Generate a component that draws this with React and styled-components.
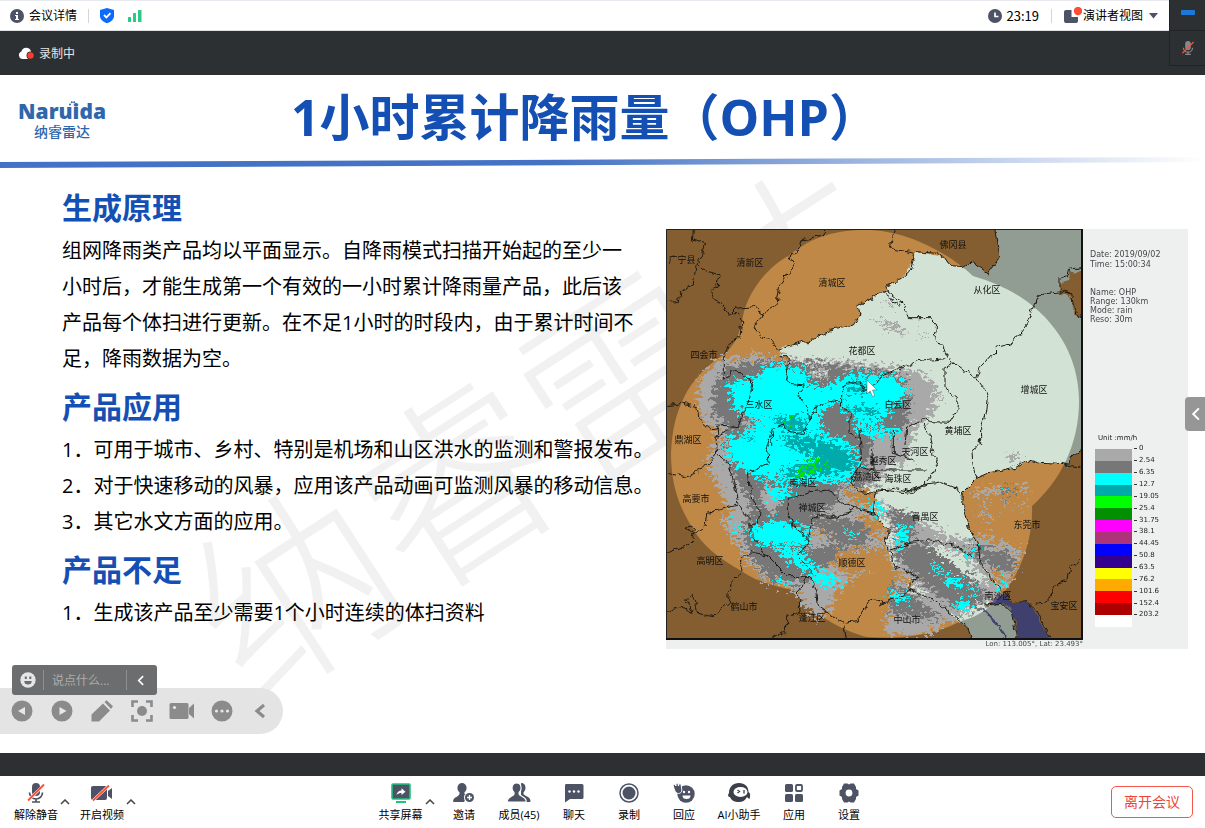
import React from "react";
import styled, { createGlobalStyle } from "styled-components";

const GlobalStyle = createGlobalStyle`
  * { box-sizing: border-box; }
  body {
    margin: 0;
    background: #fff;
    color: #000;
    font-family: "Open Sans", "Noto Sans CJK SC", sans-serif;
    font-size: 12px;
  }
  button, input { font: inherit; }
  h1, h2, p, ol, ul, dl, dd, figure { margin: 0; padding: 0; }
  ol, ul { list-style: none; }
  svg { display: block; }
`;

const ink = "#4d5364";
const red = "#ff4d35";

/* ---------- layout ---------- */

const Page = styled.div`
  min-height: 100vh;
  display: flex;
  flex-direction: column;
  position: relative;
`;

const Header = styled.header`
  height: 31px;
  display: flex;
  justify-content: space-between;
  align-items: center;
  padding: 0 47px 0 10px;
  border-top: 1px solid #e8e8f0;
  border-bottom: 1px solid #dfe0e4;
  background: #fff;
`;

const HeaderGroup = styled.div`
  display: flex;
  align-items: center;
  gap: ${(p) => p.$gap}px;
`;

const PlainButton = styled.button`
  display: flex;
  align-items: center;
  gap: ${(p) => p.$gap || 0}px;
  padding: 0;
  border: 0;
  background: none;
  color: inherit;
  line-height: 16px;
  white-space: nowrap;
  cursor: pointer;
`;

const Divider = styled.span`
  width: 1px;
  height: ${(p) => p.$height || 14}px;
  background: ${(p) => p.$color || "#d4d5d9"};
`;

const Clock = styled.span`
  display: flex;
  align-items: center;
  gap: 5px;
  font-family: "Noto Sans CJK SC", sans-serif;
  font-size: 13px;
`;

const RecordingBar = styled.div`
  height: 44px;
  display: flex;
  align-items: center;
  gap: 5px;
  padding-left: 18px;
  background: #2d3033;
  color: #e6e6e6;
`;

const FloatingVideo = styled.aside`
  position: absolute;
  top: 0;
  right: 0;
  width: 36px;
  background: #2d3033;
  border-left: 1px solid #202224;
  border-bottom: 1px solid #202224;
`;

const FloatingCell = styled.div`
  height: ${(p) => p.$height}px;
  display: flex;
  align-items: center;
  justify-content: center;
  border-bottom: ${(p) => (p.$line ? "1px solid #202224" : "0")};
`;

const MiniBar = styled.button`
  width: 14px;
  height: 5px;
  margin-bottom: 6px;
  padding: 0;
  border: 0;
  border-radius: 1px;
  background: #1c79d9;
`;

const Slide = styled.main`
  flex: 1;
  display: flex;
  flex-direction: column;
  position: relative;
  isolation: isolate;
  background: #fff;
`;

const SlideHead = styled.div`
  height: 82px;
  display: grid;
  grid-template-columns: 1fr auto 1fr;
  align-items: start;
  padding: 0 53px 0 18px;
`;

const Logo = styled.div`
  width: 88px;
  padding-top: 24px;
  display: flex;
  flex-direction: column;
  align-items: center;
  position: relative;
  color: #2f67ac;
`;

const LogoName = styled.span`
  font-family: "Open Sans", sans-serif;
  font-weight: 800;
  font-size: 21px;
  line-height: 25px;
`;

const LogoSub = styled.span`
  font-size: 14px;
  line-height: 16px;
  font-weight: 500;
`;

const LogoCrown = styled.svg`
  position: absolute;
  left: 51px;
  top: 26px;
`;

const Title = styled.h1`
  padding-top: 6px;
  color: #1450b4;
  font-size: 50px;
  line-height: 72px;
  font-weight: 700;
  white-space: nowrap;
`;

const Rule = styled.svg`
  width: 100%;
  height: 11px;
`;

const SlideBody = styled.div`
  flex: 1;
  display: flex;
  justify-content: space-between;
  align-items: flex-start;
  gap: 12px;
  padding: 20px 17px 60px 62px;
  position: relative;
`;

const Watermark = styled.svg`
  position: absolute;
  z-index: -1;
  left: 0;
  top: 0;
  overflow: visible;
`;

const Copy = styled.div`
  position: relative;
  flex: 0 0 592px;
`;

const Heading = styled.h2`
  margin-bottom: 5px;
  color: #1450b4;
  font-size: 30px;
  line-height: 40px;
  font-weight: 700;
`;

const Paragraph = styled.p`
  max-width: 577px;
  margin-bottom: 10px;
  font-size: 20px;
  line-height: 36px;
`;

const Points = styled.ol`
  margin-bottom: 10px;
  font-size: 20px;
  line-height: 36px;
  white-space: nowrap;
`;

const Figure = styled.figure`
  position: relative;
  flex: 0 0 522px;
  display: grid;
  grid-template-columns: 417px 1fr;
  margin-top: 41px;
  background: #eef0f0;
  color: #45484a;
  font-family: "DejaVu Sans", sans-serif;
  font-size: 7px;
`;

const Caption = styled.figcaption`
  height: 9px;
  line-height: 9px;
  text-align: right;
`;

const Side = styled.div`
  padding: 21px 0 0 7px;
`;

const Info = styled.ul`
  margin-bottom: ${(p) => p.$after}px;
  font-size: 8px;
  line-height: ${(p) => p.$line}px;
`;

const Unit = styled.p`
  margin: 0 0 6px 8px;
  line-height: 9px;
  color: #222;
`;

const Scale = styled.div`
  height: 178px;
  display: flex;
  padding-left: 5px;
`;

const Swatches = styled.div`
  width: 37px;
  display: flex;
  flex-direction: column;
`;

const Swatch = styled.span`
  flex: 1;
  background: ${(p) => p.$color};
`;

const Ticks = styled.ul`
  display: flex;
  flex-direction: column;
  margin: -6px 0 6px 2px;
`;

const Tick = styled.li`
  flex: 1;
  display: flex;
  align-items: center;
  gap: 2px;
  line-height: 9px;
  color: #222;
  &::before {
    content: "";
    width: 3px;
    height: 1px;
    background: #333;
  }
`;

const Cursor = styled.svg`
  position: absolute;
  left: 200px;
  top: 150px;
`;

const SideHandle = styled.button`
  position: absolute;
  right: 0;
  top: 322px;
  width: 20px;
  height: 34px;
  display: flex;
  align-items: center;
  justify-content: center;
  padding: 0;
  border: 0;
  border-radius: 4px 0 0 4px;
  background: #969696;
`;

const PresenterTools = styled.div`
  position: absolute;
  left: 0;
  bottom: 19px;
  height: 46px;
  display: flex;
  align-items: center;
  gap: 16px;
  padding: 0 9px 0 10px;
  border-radius: 0 23px 23px 0;
  background: #e4e4e4;
`;

const ChatPill = styled.form`
  position: absolute;
  left: 12px;
  bottom: 58px;
  width: 145px;
  height: 30px;
  display: flex;
  align-items: center;
  padding: 0 8px;
  border-radius: 3px;
  background: #6b6d6e;
`;

const ChatInput = styled.input`
  flex: 1;
  min-width: 0;
  padding: 0 8px;
  border: 0;
  outline: 0;
  background: transparent;
  color: #fff;
  font-size: 12px;
  &::placeholder { color: #acaeaf; opacity: 1; }
`;

const PillToggle = styled(PlainButton)`
  width: 22px;
  justify-content: flex-end;
  padding-right: 5px;
`;

const BottomStrip = styled.div`
  height: 23px;
  background: #2d3033;
`;

const Toolbar = styled.footer`
  height: 52px;
  display: flex;
  justify-content: space-between;
  align-items: center;
  padding: 0 12px 0 14px;
  background: #fff;
`;

const ToolGroup = styled.div`
  display: flex;
  gap: ${(p) => p.$gap || 0}px;
  padding-right: ${(p) => p.$after || 0}px;
`;

const Split = styled.div`
  display: flex;
`;

const Tool = styled.button`
  width: ${(p) => p.$width || 55}px;
  height: 52px;
  display: flex;
  flex-direction: column;
  align-items: center;
  gap: 4px;
  padding: 7px 0 0;
  border: 0;
  background: none;
  color: #000;
  font-size: 11px;
  line-height: 16px;
  white-space: nowrap;
  cursor: pointer;
`;

const Caret = styled.button`
  width: 14px;
  padding: 0 2px;
  border: 0;
  background: none;
`;

const LeaveButton = styled.button`
  width: 82px;
  height: 32px;
  padding: 0;
  border: 1px solid #f4574a;
  border-radius: 5px;
  background: #fff;
  color: #ee4336;
  font-size: 14px;
  line-height: 20px;
`;

/* ---------- icons ---------- */

const Icon = ({ size = 20, w, h, box, children }) => (
  <svg width={w || size} height={h || size} viewBox={box || "0 0 20 20"} fill={ink} aria-hidden="true">
    {children}
  </svg>
);

const InfoIcon = () => (
  <Icon size={14} box="0 0 14 14">
    <circle cx="7" cy="7" r="7" />
    <rect x="6" y="3" width="2" height="2" fill="#fff" />
    <path d="M5 6h3v4h1v1H5v-1h1V7H5z" fill="#fff" />
  </Icon>
);
const ShieldIcon = () => (
  <Icon w={14} h={15} box="0 0 14 15">
    <path d="M7 0l7 2v6c0 3.500-3 6-7 7.200C3 14 0 11.500 0 8V2z" fill="#0a6cff" />
    <path d="M4 7l2.400 2.400L10.500 5.200" fill="none" stroke="#fff" strokeWidth="1.800" />
  </Icon>
);
const SignalIcon = () => (
  <Icon w={14} h={12} box="0 0 14 12">
    <g fill="#2bcb85">
      <rect y="7" width="3" height="5" rx=".5" />
      <rect x="5" y="3" width="3" height="9" rx=".5" />
      <rect x="10" width="3.500" height="12" rx=".5" />
    </g>
  </Icon>
);
const ClockIcon = () => (
  <Icon size={14} box="0 0 14 14">
    <circle cx="7" cy="7" r="7" />
    <path d="M7 3.500V7.500H10.500" fill="none" stroke="#fff" strokeWidth="1.700" />
  </Icon>
);
const ViewIcon = () => (
  <Icon w={18} h={17} box="0 0 18 17">
    <path d="M2 3h5.500v7H14v4a2 2 0 0 1-2 2H2a2 2 0 0 1-2-2V5a2 2 0 0 1 2-2z" />
    <circle cx="14" cy="4" r="4.200" fill={red} />
  </Icon>
);
const CloudIcon = () => (
  <Icon w={16} h={13} box="0 0 16 13">
    <path d="M4 12a4 4 0 0 1-.6-7.600A5 5 0 0 1 13 4.500L12 12z" fill="#fff" />
    <circle cx="12.500" cy="8.500" r="4" fill="#2d3033" />
    <circle cx="12.500" cy="8.500" r="3.200" fill="#ff3b30" />
  </Icon>
);
const MicOff = ({ color = ink, size = 20 }) => (
  <Icon size={size}>
    <rect x="6" y="0" width="8" height="13" rx="4" fill={color} />
    <path d="M3.500 9.500a6.500 6.500 0 0 0 13 0M10 16v3M6 19h8" fill="none" stroke={color} strokeWidth="1.700" />
    <path d="M2.500 17L18 2" stroke="#fff" strokeWidth={color === ink ? 3 : 0} />
    <path d="M2 17.500L18 1.500" stroke={red} strokeWidth="1.800" />
  </Icon>
);
const VideoOff = () => (
  <Icon w={22} h={20} box="0 0 22 20">
    <rect x="0" y="3" width="16" height="14" rx="2" />
    <path d="M17 8l4-3v11l-4-3z" />
    <path d="M2 17.500L18 2.500" stroke="#fff" strokeWidth="3" />
    <path d="M2 17.500L18 2.500" stroke={red} strokeWidth="1.800" />
  </Icon>
);
const ShareIcon = () => (
  <Icon>
    <rect x="1" y="1" width="18" height="15" rx="1" stroke="#20c27f" strokeWidth="1.600" />
    <rect x="5" y="18" width="10" height="2" fill="#20c27f" />
    <path d="M5.500 12c.5-3 2.500-4.500 5-4.500V5.200l4 3.600-4 3.300V10c-2 0-3.500.5-5 2z" fill="#fff" />
  </Icon>
);
const InviteIcon = () => (
  <Icon w={22} box="0 0 22 20">
    <ellipse cx="9" cy="5" rx="4.600" ry="5" />
    <path d="M6.500 8h5v3l3 1.500L11 19H1c-.7 0-1-.5-.8-1.500C1 14 6 13.500 6.500 11z" />
    <circle cx="16.500" cy="14.500" r="5.500" fill="#fff" />
    <circle cx="16.500" cy="14.500" r="4.500" />
    <path d="M16.500 12v5M14 14.500h5" stroke="#fff" strokeWidth="1.400" />
  </Icon>
);
const MembersIcon = () => (
  <Icon w={24} box="0 0 24 20">
    <path d="M14 0c3 0 4.500 2 4.500 4.800 0 2-1 3.700-2 4.700v1.500c1 2 6.500 2.500 7 6.500 0 1-.4 1.500-1.200 1.500H14z" />
    <path d="M9.500 0c3 0 4.600 2.200 4.600 5 0 2-.9 3.800-2 4.600V11c.6 2 6.500 3 7 6.500.2 1-.3 1.500-1 1.500H1.500c-1 0-1.400-.5-1.200-1.500C.9 14 6.500 13 7 11V9.600C5.800 8.800 5 7 5 5c0-2.800 1.600-5 4.500-5z" stroke="#fff" strokeWidth="1.200" />
  </Icon>
);
const ChatIcon = () => (
  <Icon>
    <path d="M2 1h16a1.500 1.500 0 0 1 1.500 1.500v12A1.500 1.500 0 0 1 18 16H6l-5 3.500V2.500A1.500 1.500 0 0 1 2 1z" />
    <g fill="#fff"><circle cx="5.500" cy="8.500" r="1.200" /><circle cx="10" cy="8.500" r="1.200" /><circle cx="14.500" cy="8.500" r="1.200" /></g>
  </Icon>
);
const RecordIcon = () => (
  <Icon>
    <circle cx="10" cy="10" r="9" fill="none" stroke={ink} strokeWidth="1.500" />
    <circle cx="10" cy="10" r="6.500" />
  </Icon>
);
const ReactIcon = () => (
  <Icon w={22} box="0 0 22 20">
    <circle cx="13" cy="11" r="8.700" />
    <path d="M0 2l1.500-.8L3 3V.5L4.800 0 5.500 3l.8-2.500L8 1l.5 4c1 3-.5 5.500-3 5.500S1.500 8 0 2z" stroke="#fff" strokeWidth="1" />
    <g fill="#fff"><circle cx="11" cy="9" r="1.200" /><circle cx="16" cy="9" r="1.200" /><path d="M9.500 12.500h8a4 3.500 0 0 1-8 0z" /></g>
  </Icon>
);
const AssistantIcon = () => (
  <Icon w={24} box="0 0 24 20">
    <path d="M12 0c6 0 9.500 3.500 9.500 9 2 1 2 4 1 7-2-1-2-2-2.500-2-1.500 3-4 5-8 5-5 0-8-2-9-5C1 14 .5 12 2 10 2 4 6 0 12 0z" fill="#3c3f47" />
    <ellipse cx="13.500" cy="9" rx="7" ry="5" fill="#fff" />
    <path d="M10.500 7l2 1.500-2 1.500M17 7v3.500" fill="none" stroke="#3c3f47" strokeWidth="1.300" />
  </Icon>
);
const AppsIcon = () => (
  <Icon>
    <rect x="1" y="1" width="8" height="8" rx="1.500" />
    <rect x="12" y="2" width="6" height="6" rx="1" fill="none" stroke={ink} strokeWidth="1.800" />
    <rect x="1" y="11" width="8" height="8" rx="1.500" />
    <rect x="11" y="11" width="8" height="8" rx="1.500" />
  </Icon>
);
const SettingsIcon = () => (
  <Icon>
    <path d="M5 .5h3.500l1.500 1 1.500-1H15l2 3.500 0 2 2.500 1.500v5L17 14v2l-2 3.500h-3.500l-1.500-1-1.500 1H5L3 16v-2L.5 12.500v-5L3 6V4z" />
    <circle cx="10" cy="10" r="3.400" fill="#fff" />
  </Icon>
);
const ChevronUp = () => (
  <svg width="10" height="6" viewBox="0 0 10 6" aria-hidden="true">
    <path d="M1 5l4-4 4 4" fill="none" stroke="#444" strokeWidth="1.500" />
  </svg>
);
const ChevronLeft = ({ color, width = 8, height = 12, stroke = 2 }) => (
  <svg width={width} height={height} viewBox="0 0 8 12" aria-hidden="true">
    <path d="M7 1L2 6l5 5" fill="none" stroke={color} strokeWidth={stroke} />
  </svg>
);

const grey = "#8b8b8b";
const presenterIcons = [
  ["上一页", <><circle cx="12" cy="12" r="10.500" fill={grey} /><path d="M15 8v8l-7-4z" fill="#e8e8e8" /></>],
  ["下一页", <><circle cx="12" cy="12" r="10.500" fill={grey} /><path d="M9.500 8v8l7-4z" fill="#e8e8e8" /></>],
  ["画笔", <path d="M1.500 22.500v-7L13 4.500 20 11.500 9 22.500zM14.500 3l2-1.800 6.500 6L21 10z" fill={grey} />],
  ["聚焦", <><circle cx="12" cy="12" r="5" fill={grey} /><path d="M2.500 8V2.500H8M16 2.500h5.500V8M21.500 16v5.500H16M8 21.500H2.500V16" fill="none" stroke={grey} strokeWidth="2.600" /></>],
  ["摄像", <><rect x="-.5" y="4" width="19" height="16" rx="1.500" fill={grey} /><path d="M19 9l5-4.500v15L19 15z" fill={grey} /><circle cx="4.500" cy="8.500" r="1.600" fill="#e8e8e8" /></>],
  ["更多", <><circle cx="12" cy="12" r="10.500" fill={grey} /><g fill="#e8e8e8"><circle cx="6.500" cy="12" r="1.600" /><circle cx="12" cy="12" r="1.600" /><circle cx="17.500" cy="12" r="1.600" /></g></>],
  ["收起", <path d="M14 6l-7 6 7 6" fill="none" stroke={grey} strokeWidth="3.200" />],
];

/* ---------- radar map ---------- */

const coverage =
  "M82 98C84 72 106 42 130 30C152 11 178 5 204 5C242 4 285 25 313 51C338 58 360 70 374 82C405 108 419 142 419 176C419 220 400 256 372 281C374 330 345 386 301 396C270 412 240 414 207 412C190 408 160 396 133 365C122 363 95 356 83 347C62 335 48 325 37 310C20 285 11 262 11 228C12 205 16 190 22 177C28 162 40 146 60 132C68 128 74 118 77 113Z";

const guangzhou =
  "335 4 338 20 339 33 327 49 312 37 303 43 290 42 283 32 257 27 247 47 240 55 227 60 228 65 213 72 198 80 200 90 193 100 173 105 147 117 122 121 118 132 127 130 130 137 127 150 143 160 138 170 148 187 157 182 173 175 190 187 190 207 200 213 202 225 200 242 190 257 200 267 215 268 213 288 228 305 225 320 233 342 258 352 250 358 252 365 263 368 283 385 307 402 312 414 357 414 353 392 350 385 342 378 325 382 333 370 338 362 320 338 318 318 308 302 303 282 303 267 317 253 330 248 345 244 355 242 370 234 380 237 400 238 410 242 412 230 422 226 422 95 413 85 412 73 400 68 400 58 408 55 410 48 422 46 422 4";

const bay =
  "345 370 353 377 367 376 375 385 382 400 391 414 357 414 356 400 353 392 348 382 342 378 328 380 336 372";

/* district borders, one group per quarter of the map, traced at three times its size */
const borders = [
  [0, 0, "M100 12 97 45 137 55 128 90 108 115 130 135 180 150 175 180 150 195 160 220 190 240 205 270 240 268 245 295 240 335 205 360 190 400 190 460 205 455 215 437 250 445 278 480 265 535 245 570 235 605 170 600 175 640M108 120 100 180 60 200 55 230 22 232M210 270 230 250 280 245 310 268 285 300 300 335 330 345 355 375 375 365 440 350 520 315 580 300 600 270 595 240 640 215 675 200 685 195 680 178 720 165 750 140 765 85 690 70 705 12M310 268 350 240 360 180 405 115 390 95 420 70 425 45 490 30 495 12M355 395 385 395 378 450 390 475 430 480 415 510 445 560 450 590 430 625 390 620 365 600 340 610 335 660M450 580 470 545 520 525 545 540 570 560 570 620 600 640 600 660M545 540 545 485 570 470 600 475 610 500 640 480 670 450 740 420M670 205 720 240M22 542 70 535 110 545 118 585 150 615 175 610"],
  [220, 0, "M108 80 170 85 190 95 210 125 250 128 275 110 322 147 357 100 345 12M20 200 70 240 85 278 150 278 170 300 165 340 190 370 205 400 280 455 290 460 300 430 360 365 395 355 440 300 460 245 475 210 545 200 575 205 580 240 605 285M605 125 570 130 565 150 540 160 540 190 575 205M290 460 315 495 325 520 318 570 305 605 305 660M205 400 110 410 60 435M225 410 195 430 195 490 235 520 230 560 210 592 155 590 130 580 80 610 75 660M130 600 150 640"],
  [0, 205, "M22 128 80 140 130 115 170 70 165 20 200 0M170 70 200 95 220 150 235 225 270 270 270 310 320 380 380 440 450 440 470 480 475 530 550 580 560 630M335 0 320 60 325 100 265 130 275 210 300 240 295 280 268 285M22 368 90 340 105 310 75 295 90 288 100 295 95 310M105 310 135 290 140 250 230 225M22 545 60 530 100 550 80 510 95 490 105 520 110 550 160 560 205 520 210 460 250 425 240 390 270 365 320 375M330 628 380 600 380 560 420 545 415 480 440 440M455 430 410 375 445 345 440 320 400 290 385 240 385 205 450 185 510 180 545 220 590 235 640 250 685 300 675 345 690 370M445 320 460 260 530 262 590 235M555 580 590 575 630 510 680 520M600 0 605 100 570 155 600 185 645 190 640 250M605 110 640 120 660 145M635 60 640 120 740 120 800 120M645 185 700 175 750 185 800 165M700 0 700 70 760 90"],
  [220, 205, "M305 0 300 40 275 60 280 110 290 145 250 185 248 230 265 290 295 340 300 400 355 470M290 145 330 128 375 118 405 112 450 88 480 97 540 100 600 112M570 105 575 75 605 62M150 10 150 30 160 75 175 90 160 130 130 165 95 190 0 180M130 165 180 155 230 175 248 210M30 360 90 340 150 333 220 345 290 385M30 365 45 410 115 440 90 455 90 480 160 510 225 560 262 590 275 628M0 525 45 505 90 485M470 525 510 505 520 470 560 450 570 410 605 390M315 525 365 520 395 550 410 628M355 470 400 515 440 512 470 540 512 628"],
];

const rain = [
  ["#a9a9a9", [
    "42 150 60 134 88 133 94 127 106 133 130 134 180 136 230 142 262 148 276 162 274 190 256 202 252 215 248 235 228 245 218 262 205 262 215 275 215 298 228 308 226 325 212 345 190 355 175 365 172 380 160 395 145 382 135 365 105 356 90 340 76 318 60 296 72 290 58 262 48 245 52 222 60 207 46 200 38 180",
    "218 278 245 287 290 312 325 315 350 320 363 325 355 345 345 362 335 372 315 385 290 395 272 408 235 411 226 408 228 370 240 352 228 325 235 310",
    "213 95 235 98 246 110 230 105", "225 75 236 78 230 82", "258 108 268 112 262 114", "273 168 285 172 280 176",
    "312 265 345 262 345 268 315 272", "359 259 368 262 366 268 360 268", "322 278 327 278 325 285", "310 288 335 290 330 294", "346 230 360 228 361 236 350 235", "343 274 350 275 348 284 344 282", "315 308 332 310 322 316", "360 275 364 280 360 286",
  ]],
  ["#777777", [
    "66 142 92 136 125 137 165 138 200 143 245 150 250 172 246 198 234 214 215 210 206 235 214 255 200 262 180 258 178 280 150 290 212 298 208 320 182 322 168 342 150 345 145 358 112 357 96 338 82 312 92 280 76 255 64 225 68 200 54 190 52 168",
    "228 282 256 293 254 318 240 322", "232 328 264 318 302 345 326 368 318 382 298 386 262 358", "229 358 250 368 282 393 255 392 230 388", "305 318 322 322 350 328 357 342 346 348 325 338", "343 262 354 262 352 269 344 269", "345 275 349 276 348 283",
  ]],
  ["#a9a9a9", ["150 140 170 143 168 153 154 154", "212 214 236 218 240 230 216 232", "150 298 180 318 150 326", "84 192 100 198 84 202", "105 255 120 270 116 290 100 282"]],
  ["#bf8846", ["182 262 212 268 214 280 200 282 186 272", "192 284 220 300 226 318 208 306", "178 326 222 322 230 338 200 348 186 350 172 342", "150 310 172 303 160 313", "182 365 228 352 226 395 196 396 180 384", "240 350 256 356 246 360", "330 345 346 350 336 362"]],
  ["#d2e2d4", ["156 143 166 147 160 152", "268 318 298 328 332 358 322 357 292 340", "248 356 268 368 262 372"]],
  ["#00ffff", [
    "68 158 98 152 104 141 125 140 146 145 148 160 172 160 188 148 236 152 250 166 234 180 218 202 196 202 190 186 172 178 160 190 160 206 186 216 202 236 190 256 150 258 102 254 84 246 66 232 68 214 94 204 100 196 74 184",
    "88 306 110 294 150 304 148 322 124 320 100 320", "110 322 134 322 148 332 156 346 184 354 182 358 162 361 144 346", "115 353 130 356 128 361 118 358", "182 306 200 310 197 316", "107 262 132 262 133 270 110 276", "68 292 84 302 80 306", "192 204 242 204 236 212 205 211", "196 270 204 280 200 284", "214 274 225 284 217 294", "240 298 249 302 242 324 236 320",
    "269 338 278 342 286 352 274 346", "282 350 299 354 303 364 290 360", "308 362 320 368 315 371", "295 376 312 378 305 386 297 384", "333 358 343 358 340 367", "230 364 240 368 254 376 243 377 231 372", "314 316 322 324 317 324", "300 326 315 333 312 336", "346 264 350 264 349 268", "340 348 345 351 342 353", "356 324 361 325 358 329",
  ]],
  ["#00aaaa", [
    "110 190 142 192 146 206 126 206", "186 160 206 158 206 168 188 168", "190 181 218 185 216 192 192 188", "120 212 150 212 184 222 196 240 182 248 136 253 118 250 140 238 162 234 130 222", "84 212 96 214 90 217",
  ]],
  ["#00e600", ["127 195 134 200 131 204", "136 246 148 240 152 231 157 239 169 238 150 246 141 251", "194 164 197 165 195 167"]],
];

const places = [
  ["广宁县", 22, 34], ["清新区", 90, 37], ["清城区", 172, 57], ["四会市", 44, 129], ["花都区", 202, 125], ["三水区", 99, 179],
  ["白云区", 238, 179], ["鼎湖区", 28, 214], ["佛冈县", 293, 19], ["从化区", 327, 64], ["增城区", 374, 164], ["黄埔区", 298, 205],
  ["天河区", 255, 226], ["越秀区", 223, 235], ["荔湾区", 207, 251], ["海珠区", 238, 253], ["南海区", 143, 257], ["高要市", 36, 273],
  ["禅城区", 152, 282], ["番禺区", 265, 291], ["高明区", 50, 335], ["顺德区", 192, 337], ["鹤山市", 84, 381], ["蓬江区", 152, 392],
  ["中山市", 247, 394], ["东莞市", 367, 299], ["南沙区", 338, 370], ["宝安区", 404, 380],
];

const RadarMap = () => (
  <svg width="417" height="411" viewBox="6 4 417 411" role="img" aria-label="一小时累计降雨量雷达图">
    <defs>
      <filter id="speckle" filterUnits="userSpaceOnUse" x="0" y="0" width="430" height="420" colorInterpolationFilters="sRGB">
        <feTurbulence type="fractalNoise" baseFrequency="0.2 0.3" numOctaves="4" seed="11" />
        <feDisplacementMap in="SourceGraphic" scale="26" xChannelSelector="R" yChannelSelector="G" />
      </filter>
      <filter id="coast" filterUnits="userSpaceOnUse" x="0" y="0" width="430" height="420" colorInterpolationFilters="sRGB">
        <feTurbulence type="fractalNoise" baseFrequency="0.15" numOctaves="2" seed="3" />
        <feDisplacementMap in="SourceGraphic" scale="7" xChannelSelector="R" yChannelSelector="G" />
      </filter>
      <clipPath id="frame"><rect x="6" y="4" width="417" height="411" /></clipPath>
    </defs>
    <g clipPath="url(#frame)">
      <rect x="6" y="4" width="417" height="411" fill="#bf8846" />
      <g filter="url(#coast)">
        <polygon points={guangzhou} fill="#d2e2d4" />
        <polygon points={bay} fill="#5d5da0" />
        <path d="M324 383c4 12 16 12 22 32" fill="none" stroke="#5d5da0" strokeWidth="2" />
        <path d="M422 0v46M422 95v131" stroke="#d2e2d4" strokeWidth="8" />
      </g>
      <path d={`M0 0H430V420H0Z${coverage}`} fill="#000" fillOpacity=".31" fillRule="evenodd" />
      {rain.map(([color, patches], i) => (
        <g key={i} fill={color} filter="url(#speckle)">
          {patches.map((p) => <polygon key={p} points={p} />)}
        </g>
      ))}
      <g filter="url(#coast)" fill="none" stroke="#1c1a14" strokeWidth="1">
        {borders.map(([x, y, d]) => (
          <g key={d} transform={`translate(${x} ${y}) scale(.3333)`}>
            <path d={d} strokeWidth="3" />
          </g>
        ))}
      </g>
      <g fontFamily='"Noto Sans CJK SC", sans-serif' fontSize="9" textAnchor="middle" fill="#111">
        {places.map(([name, x, y]) => <text key={name} x={x} y={y + 4}>{name}</text>)}
      </g>
    </g>
    <path d="M6.500 415V4.500H423" fill="none" stroke="#222" />
    <path d="M422 4V414H6" fill="none" stroke="#111" strokeWidth="2" />
  </svg>
);

const scale = [
  ["#a9a9a9", "0"], ["#777777", "2.54"], ["#00ffff", "6.35"], ["#00aaaa", "12.7"], ["#00ff00", "19.05"],
  ["#009000", "25.4"], ["#ff00ff", "31.75"], ["#ad3478", "38.1"], ["#0000ff", "44.45"], ["#340090", "50.8"],
  ["#ffff00", "63.5"], ["#ffaa00", "76.2"], ["#ff0000", "101.6"], ["#ad0000", "152.4"], ["#ffffff", "203.2"],
];

const tools = [
  ["邀请", InviteIcon], ["成员(45)", MembersIcon], ["聊天", ChatIcon], ["录制", RecordIcon],
  ["回应", ReactIcon], ["AI小助手", AssistantIcon], ["应用", AppsIcon], ["设置", SettingsIcon],
];

const SplitTool = ({ label, icon: Glyph }) => (
  <Split>
    <Tool $width={44}><Glyph />{label}</Tool>
    <Caret aria-label={`${label}选项`}><ChevronUp /></Caret>
  </Split>
);

export default function App() {
  return (
    <Page>
      <GlobalStyle />
      <Header>
        <HeaderGroup $gap={11}>
          <PlainButton $gap={5}><InfoIcon />会议详情</PlainButton>
          <Divider />
          <HeaderGroup $gap={14}><ShieldIcon /><SignalIcon /></HeaderGroup>
        </HeaderGroup>
        <HeaderGroup $gap={12}>
          <Clock><ClockIcon />23:19</Clock>
          <Divider />
          <PlainButton $gap={1}>
            <ViewIcon />演讲者视图
            <svg width="14" height="6" viewBox="0 0 14 6" aria-hidden="true"><path d="M5 0h9L9.500 5.500z" fill={ink} /></svg>
          </PlainButton>
        </HeaderGroup>
      </Header>

      <RecordingBar><CloudIcon />录制中</RecordingBar>

      <FloatingVideo>
        <FloatingCell $height={31} $line><MiniBar aria-label="最小化" /></FloatingCell>
        <FloatingCell $height={34}><MicOff color="#85898c" size={14} /></FloatingCell>
      </FloatingVideo>

      <Slide>
        <SlideHead>
          <Logo>
            <LogoName>Naruida</LogoName>
            <LogoSub>纳睿雷达</LogoSub>
            <LogoCrown width="8" height="5" viewBox="0 0 8 5" fill="#2f67ac" aria-hidden="true">
              <circle cx="1" cy="3.500" r="1" /><circle cx="2.800" cy="1.200" r="1" /><circle cx="5.200" cy="1.200" r="1" /><circle cx="7" cy="3.500" r="1" />
            </LogoCrown>
          </Logo>
          <Title>1小时累计降雨量（OHP）</Title>
        </SlideHead>
        <Rule viewBox="0 0 1205 11" preserveAspectRatio="none" aria-hidden="true">
          <defs>
            <linearGradient id="fade">
              <stop offset="0" stopColor="#4472c4" />
              <stop offset=".46" stopColor="#4472c4" />
              <stop offset="1" stopColor="#fff" />
            </linearGradient>
          </defs>
          <polygon points="0,5 1205,0 1205,5 0,11" fill="url(#fade)" />
        </Rule>

        <SlideBody>
          <Watermark width="1000" height="500" viewBox="0 0 1000 500" aria-hidden="true">
            <text
              transform="translate(298 434) rotate(-33)"
              x="-96" y="62"
              fontFamily='"Noto Sans CJK SC", sans-serif'
              fontWeight="300"
              fontSize="196"
              fill="#f1f1f1"
            >纳睿雷达</text>
          </Watermark>

          <Copy>
            <Heading>生成原理</Heading>
            <Paragraph>
              组网降雨类产品均以平面显示。自降雨模式扫描开始起的至少一小时后，才能生成第一个有效的一小时累计降雨量产品，此后该产品每个体扫进行更新。在不足1小时的时段内，由于累计时间不足，降雨数据为空。
            </Paragraph>
            <Heading>产品应用</Heading>
            <Points>
              <li>1．可用于城市、乡村、特别是机场和山区洪水的监测和警报发布。</li>
              <li>2．对于快速移动的风暴，应用该产品动画可监测风暴的移动信息。</li>
              <li>3．其它水文方面的应用。</li>
            </Points>
            <Heading>产品不足</Heading>
            <Points>
              <li>1．生成该产品至少需要1个小时连续的体扫资料</li>
            </Points>
          </Copy>

          <Figure>
            <div>
              <RadarMap />
              <Caption>Lon: 113.005°, Lat: 23.493°</Caption>
            </div>
            <Side>
              <Info $line={10} $after={18}>
                <li>Date: 2019/09/02</li>
                <li>Time: 15:00:34</li>
              </Info>
              <Info $line={9} $after={110}>
                <li>Name: OHP</li>
                <li>Range: 130km</li>
                <li>Mode: rain</li>
                <li>Reso: 30m</li>
              </Info>
              <Unit>Unit :mm/h</Unit>
              <Scale>
                <Swatches>{scale.map(([c]) => <Swatch key={c} $color={c} />)}</Swatches>
                <Ticks>{scale.map(([, v]) => <Tick key={v}>{v}</Tick>)}</Ticks>
              </Scale>
            </Side>
            <Cursor width="12" height="19" viewBox="0 0 12 19" aria-hidden="true">
              <path d="M1 1v14l3.200-3 2.300 5.500 2.300-1L6.500 11H11z" fill="#fff" stroke="#555" strokeWidth=".5" />
            </Cursor>
          </Figure>
        </SlideBody>

        <SideHandle aria-label="展开侧栏"><ChevronLeft color="#fff" width={9} height={14} stroke={1.8} /></SideHandle>

        <PresenterTools>
          {presenterIcons.map(([label, shape]) => (
            <PlainButton key={label} aria-label={label}>
              <svg width="24" height="24" viewBox="0 0 24 24" overflow="visible" aria-hidden="true">{shape}</svg>
            </PlainButton>
          ))}
        </PresenterTools>

        <ChatPill onSubmit={(e) => e.preventDefault()}>
          <PlainButton type="button" aria-label="表情">
            <svg width="23" height="16" viewBox="0 0 23 16" aria-hidden="true">
              <circle cx="8" cy="8" r="7.700" fill="#e6e6e6" />
              <path d="M4.800 4.500h2v2.500h-2zM9.300 4.500h2v2.500h-2zM4.300 9h7.400a3.700 3.500 0 0 1-7.400 0z" fill="#6b6d6e" />
            </svg>
          </PlainButton>
          <Divider $height={20} $color="#8e9091" />
          <ChatInput aria-label="聊天内容" placeholder="说点什么..." />
          <Divider $height={20} $color="#8e9091" />
          <PillToggle type="button" aria-label="收起"><ChevronLeft color="#fff" width={7} height={11} /></PillToggle>
        </ChatPill>
      </Slide>

      <BottomStrip />

      <Toolbar>
        <ToolGroup $gap={8} $after={6}>
          <SplitTool label="解除静音" icon={MicOff} />
          <SplitTool label="开启视频" icon={VideoOff} />
        </ToolGroup>
        <ToolGroup>
          <SplitTool label="共享屏幕" icon={ShareIcon} />
          {tools.map(([label, Glyph]) => <Tool key={label}><Glyph />{label}</Tool>)}
        </ToolGroup>
        <LeaveButton>离开会议</LeaveButton>
      </Toolbar>
    </Page>
  );
}
